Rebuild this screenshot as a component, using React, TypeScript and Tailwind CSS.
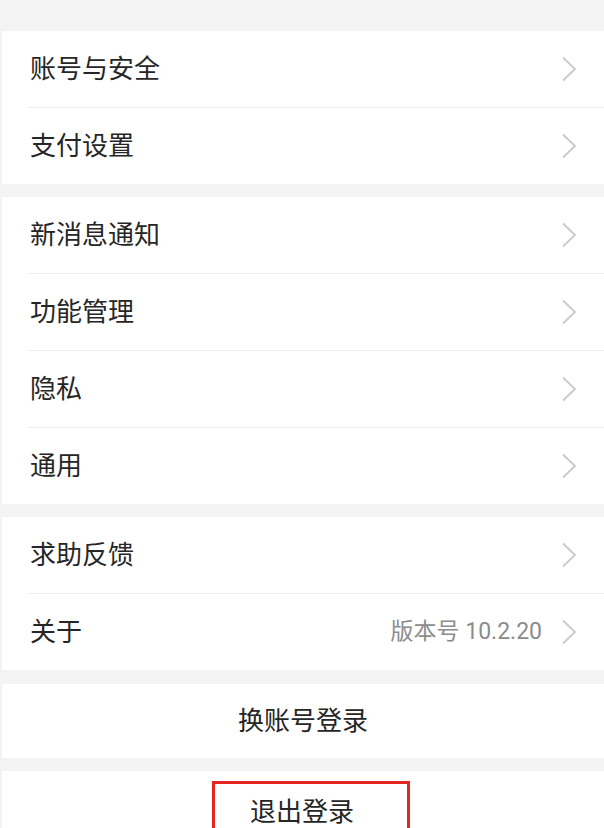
import React from "react";

const Chevron = () => (
  <svg width="16" height="26" viewBox="0 0 16 26" fill="none" className="shrink-0">
    <path d="M2 1.5L14 13L2 24.5" stroke="#c9c9c9" strokeWidth="1.8" />
  </svg>
);

type Row = { label: string; extra?: string };

const groups: Row[][] = [
  [{ label: "账号与安全" }, { label: "支付设置" }],
  [{ label: "新消息通知" }, { label: "功能管理" }, { label: "隐私" }, { label: "通用" }],
  [{ label: "求助反馈" }, { label: "关于", extra: "版本号 10.2.20" }],
];

const Group = ({ rows }: { rows: Row[] }) => (
  <div className="bg-white">
    {rows.map((r, i) => (
      <div key={r.label} className={i > 0 ? "ml-[26px] border-t border-[#ededed]" : "ml-[26px]"}>
        <div className="-ml-[26px] flex h-[76px] items-center pl-[28px] pr-[27px]">
          <span className="flex-1 text-[26px] text-[#262626]">{r.label}</span>
          {r.extra && <span className="mr-[19px] text-[23px] text-[#8c8c8c]">{r.extra}</span>}
          <Chevron />
        </div>
      </div>
    ))}
  </div>
);

export default function App() {
  return (
    <div
      className="h-[828px] w-[604px] overflow-hidden bg-[#f3f3f3] pl-[2px]"
      style={{ fontFamily: '"Roboto", "Noto Sans CJK SC", sans-serif' }}
    >
      <div className="h-[31px]" />
      <Group rows={groups[0]} />
      <div className="h-[13px]" />
      <Group rows={groups[1]} />
      <div className="h-[13px]" />
      <Group rows={groups[2]} />
      <div className="h-[14px]" />
      <div className="flex h-[74px] items-center justify-center bg-white text-[26px] text-[#262626]">
        换账号登录
      </div>
      <div className="h-[13px]" />
      <div className="h-[80px] bg-white pl-[210px] pt-[10px]">
        <div className="flex h-[70px] w-[198px] justify-center border-[3px] border-b-0 border-[#e3261f] pr-[18px] pt-[9px] text-[26px] text-[#262626]">
          退出登录
        </div>
      </div>
    </div>
  );
}
